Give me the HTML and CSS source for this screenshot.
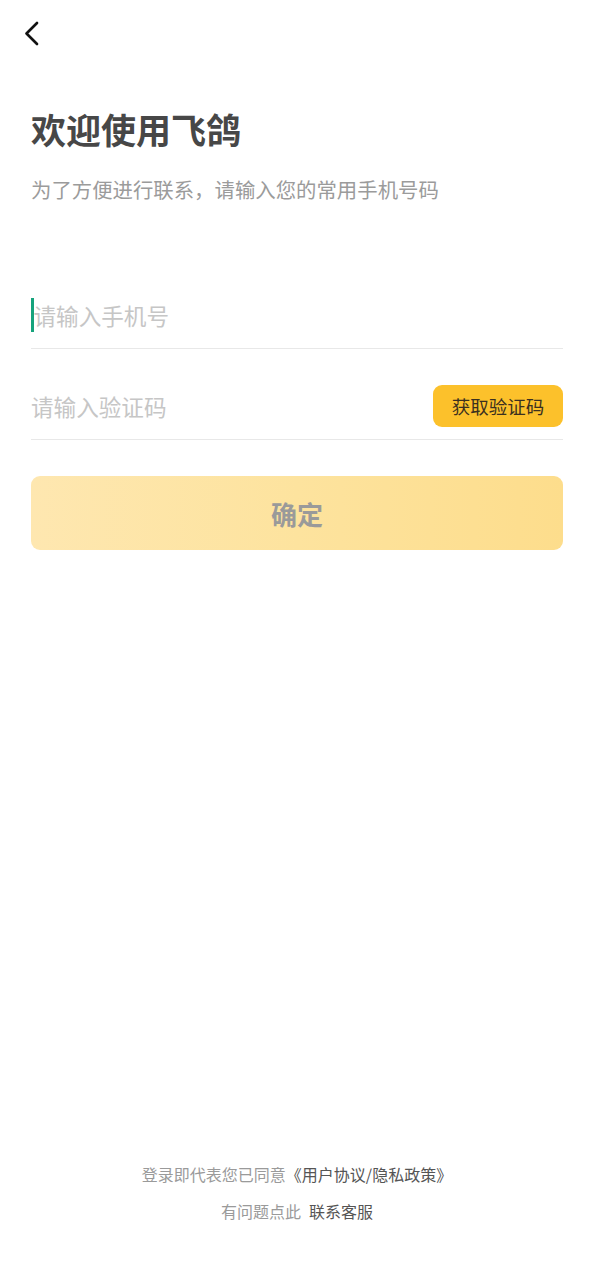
FILE: index.html
```html
<!DOCTYPE html>
<html lang="zh-CN">
<head>
<meta charset="utf-8">
<title>欢迎使用飞鸽</title>
<link rel="stylesheet" href="styles.css">
</head>
<body>
<div class="page">
  <header class="topbar">
    <button class="back" aria-label="返回">
      <svg width="17" height="25" viewBox="0 0 17 25"><path d="M14 2 L3.5 12.5 L14 23" fill="none" stroke="#111" stroke-width="2.7" stroke-linecap="round" stroke-linejoin="round"/></svg>
    </button>
  </header>
  <main class="content">
    <h1 class="title">欢迎使用飞鸽</h1>
    <p class="subtitle">为了方便进行联系，请输入您的常用手机号码</p>
    <div class="form">
      <div class="field">
        <span class="caret"></span>
        <input class="input" type="tel" placeholder="请输入手机号">
      </div>
      <div class="field">
        <input class="input" type="text" placeholder="请输入验证码">
        <button class="code-btn">获取验证码</button>
      </div>
      <button class="submit">确定</button>
    </div>
  </main>
  <footer class="footer">
    <p class="line">登录即代表您已同意<span class="link">《用户协议/隐私政策》</span></p>
    <p class="line">有问题点此<span class="link spaced">联系客服</span></p>
  </footer>
</div>
</body>
</html>
```
FILE: styles.css
```css
* { box-sizing: border-box; }
html, body { margin: 0; padding: 0; background: #fff; }
body {
  font-family: "Noto Sans CJK SC", "Noto Sans", sans-serif;
  color: #333;
}
.page {
  min-height: 1280px;
  display: flex;
  flex-direction: column;
}
.topbar {
  height: 64px;
  padding: 21px 0 0 23px;
}
.back {
  border: 0;
  background: none;
  padding: 0;
  width: 18px;
  height: 25px;
  display: block;
}
.back svg { display: block; }
.content {
  padding: 0 31px;
}
.title {
  margin: 42px 0 0;
  font-size: 35px;
  line-height: 46px;
  font-weight: 700;
  color: #474747;
}
.subtitle {
  margin: 21px 0 0;
  font-size: 20.4px;
  line-height: 32px;
  color: #9b9b9b;
}
.form {
  margin-top: 53px;
}
.field {
  display: flex;
  align-items: center;
  height: 91px;
  padding-top: 36px;
  padding-bottom: 12px;
  border-bottom: 1px solid #e8e8e8;
}
.caret {
  width: 2.5px;
  height: 34px;
  background: #16a37c;
  flex: none;
}
.input {
  flex: 1;
  min-width: 0;
  border: 0;
  outline: none;
  background: transparent;
  font-family: inherit;
  font-size: 22.6px;
  height: 42px;
  padding: 0;
  color: #333;
}
.input::placeholder { color: #c6c6c6; }
.code-btn {
  flex: none;
  width: 130px;
  height: 42px;
  border: 0;
  border-radius: 9px;
  background: #fcc12b;
  color: #3b3020;
  font-family: inherit;
  font-size: 18.5px;
  padding: 0;
}
.submit {
  display: block;
  width: 100%;
  height: 74px;
  margin-top: 36px;
  border: 0;
  border-radius: 9px;
  background: linear-gradient(90deg, #fee7b0 0%, #fde39e 50%, #fddd8c 100%);
  color: #9a9a9a;
  font-family: inherit;
  font-size: 26px;
  font-weight: 700;
}
.footer {
  margin-top: auto;
  padding-bottom: 50px;
  text-align: center;
}
.line {
  margin: 0;
  font-size: 16px;
  line-height: 37px;
  color: #9a9a9a;
}
.link { color: #555; }
.spaced { margin-left: 8px; }
```
